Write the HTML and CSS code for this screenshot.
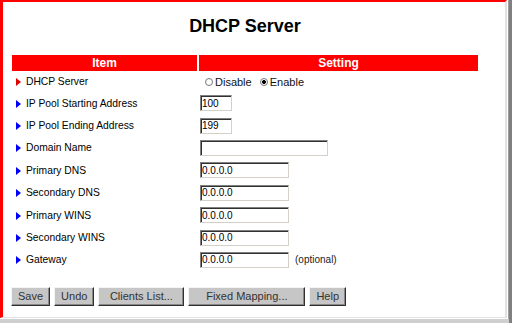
FILE: index.html
```html
<!DOCTYPE html>
<html>
<head>
<meta charset="utf-8">
<title>DHCP Server</title>
<link rel="stylesheet" href="styles.css">
</head>
<body>
<div class="screen">
  <div class="bezel">
    <div class="bezel-inner">
      <div class="frame">
        <div class="content">
          <h1 class="title">DHCP Server</h1>
          <table class="grid">
            <thead>
              <tr><th class="col-item">Item</th><th class="col-setting">Setting</th></tr>
            </thead>
            <tbody>
              <tr class="row-first">
                <td class="label"><span class="arrow arrow-red"></span>DHCP Server</td>
                <td class="setting">
                  <label class="radio"><input type="radio" name="dhcp" value="0"><span>Disable</span></label>
                  <label class="radio"><input type="radio" name="dhcp" value="1" checked><span>Enable</span></label>
                </td>
              </tr>
              <tr>
                <td class="label"><span class="arrow"></span>IP Pool Starting Address</td>
                <td class="setting"><input class="field field-xs" type="text" value="100"></td>
              </tr>
              <tr>
                <td class="label"><span class="arrow"></span>IP Pool Ending Address</td>
                <td class="setting"><input class="field field-xs" type="text" value="199"></td>
              </tr>
              <tr>
                <td class="label"><span class="arrow"></span>Domain Name</td>
                <td class="setting"><input class="field field-lg" type="text" value=""></td>
              </tr>
              <tr>
                <td class="label"><span class="arrow"></span>Primary DNS</td>
                <td class="setting"><input class="field field-md" type="text" value="0.0.0.0"></td>
              </tr>
              <tr>
                <td class="label"><span class="arrow"></span>Secondary DNS</td>
                <td class="setting"><input class="field field-md" type="text" value="0.0.0.0"></td>
              </tr>
              <tr>
                <td class="label"><span class="arrow"></span>Primary WINS</td>
                <td class="setting"><input class="field field-md" type="text" value="0.0.0.0"></td>
              </tr>
              <tr>
                <td class="label"><span class="arrow"></span>Secondary WINS</td>
                <td class="setting"><input class="field field-md" type="text" value="0.0.0.0"></td>
              </tr>
              <tr>
                <td class="label"><span class="arrow"></span>Gateway</td>
                <td class="setting"><input class="field field-md" type="text" value="0.0.0.0"><span class="hint">(optional)</span></td>
              </tr>
            </tbody>
          </table>
          <div class="actions">
            <button class="btn" type="button">Save</button>
            <button class="btn" type="button">Undo</button>
            <button class="btn btn-clients" type="button">Clients List...</button>
            <button class="btn btn-fixed" type="button">Fixed Mapping...</button>
            <button class="btn" type="button">Help</button>
          </div>
        </div>
      </div>
    </div>
  </div>
</div>
</body>
</html>
```
FILE: styles.css
```css
html, body {
  margin: 0;
  padding: 0;
}

body {
  background: #c8c8c8;
  font-family: "Liberation Sans", Arial, sans-serif;
  color: #000;
}

.screen {
  width: 509px;
  height: 323px;
  border-right: 3px solid #808080;
  background: #cfcfcf;
}

.bezel {
  display: inline-block;
  vertical-align: top;
  border-right: 1px solid #a0a0a0;
}

.bezel-inner {
  border-right: 1px solid #ffffff;
  border-bottom: 1px solid #ffffff;
}

.frame {
  width: 502px;
  height: 315px;
  background: #fff;
  border-top: 2px solid #ff0000;
  border-left: 3px solid #ff0000;
  border-right: 2px solid #e2e2e2;
  border-bottom: 1px solid #e2e2e2;
}

.content {
  width: 466px;
  padding-left: 9px;
}

.title {
  margin: 0;
  padding-top: 14px;
  height: 39px;
  font-size: 18px;
  line-height: 21px;
  font-weight: bold;
  text-align: center;
}

.grid {
  width: 466px;
  border-collapse: separate;
  border-spacing: 0;
  table-layout: fixed;
}

.grid th {
  height: 16px;
  padding: 0;
  background: #ff0000;
  color: #fff;
  font-size: 12px;
  font-weight: bold;
  line-height: 14px;
  text-align: center;
}

.grid .col-item {
  width: 185px;
  border-right: 2px solid #fff;
}

.grid td {
  padding: 0;
  height: 22.4px;
  vertical-align: middle;
}

.grid .row-first td {
  height: 21px;
}

.label {
  font-size: 10.3px;
  white-space: nowrap;
}

.arrow {
  display: inline-block;
  width: 0;
  height: 0;
  border-left: 5px solid #0000ff;
  border-top: 4.5px solid transparent;
  border-bottom: 4.5px solid transparent;
  margin: 0 5px 0 4px;
  vertical-align: -1px;
}

.arrow-red {
  border-left-color: #e00000;
}

.setting {
  padding-left: 1px !important;
  font-size: 11px;
  white-space: nowrap;
}

.radio {
  display: inline-flex;
  align-items: center;
  font-size: 11px;
  color: #111;
}

.radio input {
  -webkit-appearance: none;
  appearance: none;
  width: 8px;
  height: 8px;
  margin: 0 2px 0 5px;
  border: 1px solid #777;
  border-radius: 50%;
  background: #fff;
}

.radio input:checked {
  background: radial-gradient(circle, #000 0 1.8px, #fff 2.2px);
}

.field {
  box-sizing: border-box;
  height: 16px;
  margin: 0;
  padding: 0 0 0 1px;
  border-style: solid;
  border-width: 1px;
  border-color: #808080 #d4d0c8 #d4d0c8 #808080;
  box-shadow: inset 1px 1px 0 #303030;
  background: #fff;
  font-family: "Liberation Sans", Arial, sans-serif;
  font-size: 10px;
  color: #000;
  vertical-align: middle;
  outline: none;
}

.field-xs { width: 32px; }
.field-md { width: 89px; }
.field-lg { width: 128px; }

.hint {
  margin-left: 6px;
  font-size: 10px;
  vertical-align: middle;
  color: #222;
}

.actions {
  display: flex;
  gap: 4px;
  margin-top: 16px;
  margin-left: -1px;
}

.btn {
  box-sizing: border-box;
  height: 19px;
  padding: 0 6px;
  margin: 0;
  border: 1px solid;
  border-color: #f4f4f4 #303030 #303030 #f4f4f4;
  box-shadow: inset -1px -1px 0 #888;
  background: #c6c6c6;
  font-family: "Liberation Sans", Arial, sans-serif;
  font-size: 11px;
  color: #333;
  line-height: 15px;
}

.btn-clients { width: 86px; }
.btn-fixed { width: 117px; }
```
